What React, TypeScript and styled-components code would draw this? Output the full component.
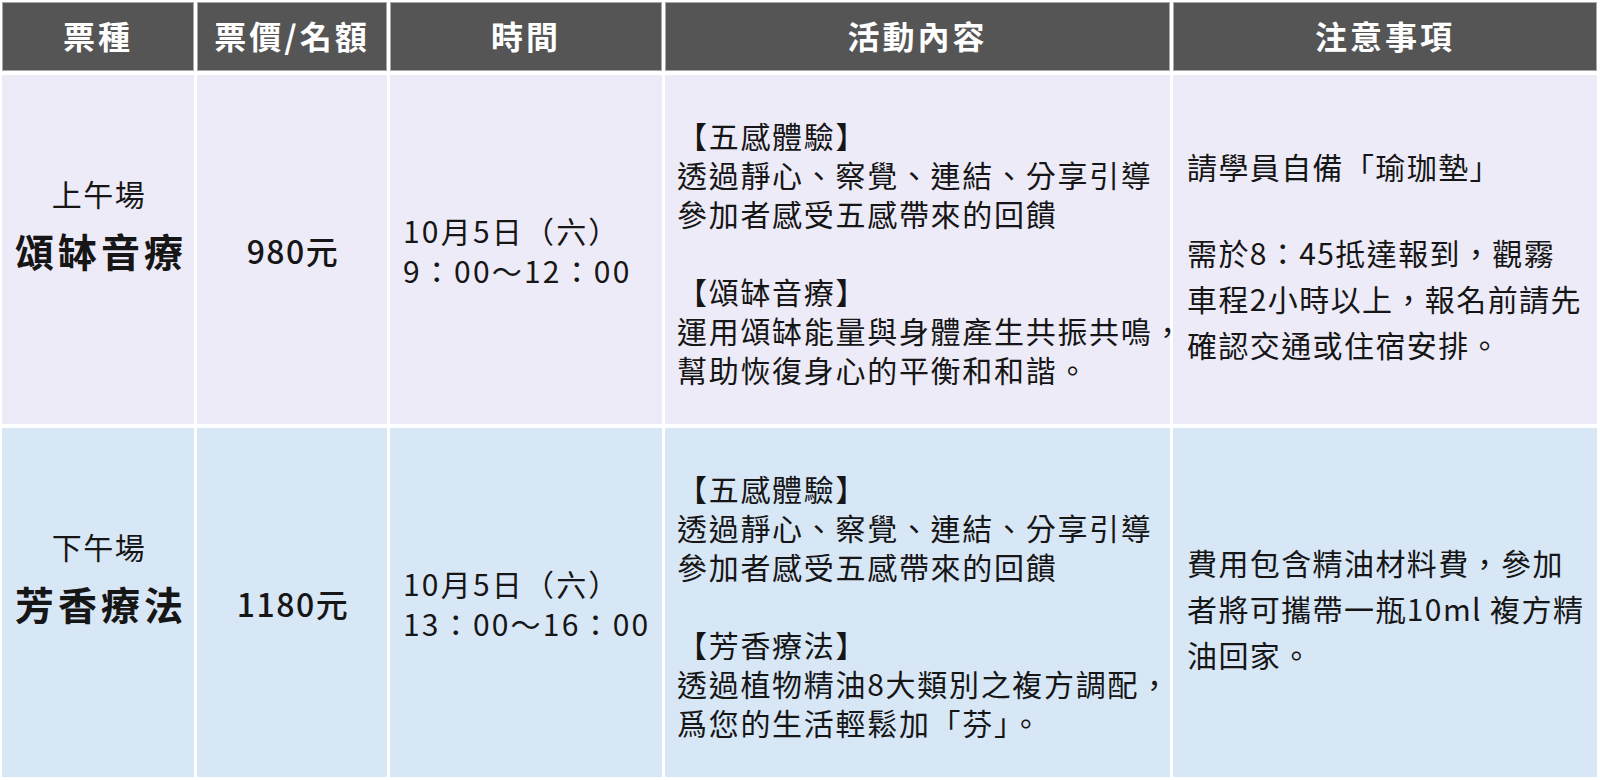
import styled, { createGlobalStyle } from "styled-components"

const GlobalStyle = createGlobalStyle`
    html, body {
        margin: 0;
        padding: 0;
        background: #ffffff;
    }
    body {
        font-family: "Noto Sans CJK TC", "Noto Sans", sans-serif;
        color: #161616;
    }
`

const Page = styled.div`
    padding: 2px 3px 3px 2px;
`

const Grid = styled.div`
    display: grid;
    grid-template-columns: 192px 190px 272px 505px 424px;
    grid-template-rows: 69px 349px 349px;
    column-gap: 3px;
    row-gap: 4px;
`

const HeadCell = styled.div`
    display: flex;
    align-items: center;
    justify-content: center;
    background-color: #555555;
    border: 1px solid #a9a9a9;
    color: #ffffff;
    font-size: 32px;
    font-weight: 700;
    letter-spacing: 3px;
    padding-bottom: 3px;
    box-sizing: border-box;
`

interface CellProps {
    $tone: "morning" | "afternoon"
    $inset?: number
    $shift?: number
}

// $inset: left padding for left aligned columns, centered otherwise
// $shift: pushes the content down from the true middle (positive) or up (negative)
const Cell = styled.div<CellProps>`
    display: flex;
    flex-direction: column;
    justify-content: center;
    align-items: ${p => (p.$inset !== undefined ? "flex-start" : "center")};
    background-color: ${p => (p.$tone === "morning" ? "#edebf8" : "#d8e7f6")};
    padding-left: ${p => p.$inset ?? 0}px;
    padding-top: ${p => Math.max(p.$shift ?? 0, 0)}px;
    padding-bottom: ${p => Math.max(-(p.$shift ?? 0), 0)}px;
    box-sizing: border-box;
    white-space: nowrap;
`

const Session = styled.div`
    font-size: 30px;
    line-height: 40px;
    letter-spacing: 1.5px;
    padding-left: 2px;
`

const Title = styled.div`
    font-size: 39px;
    line-height: 56px;
    font-weight: 700;
    letter-spacing: 4px;
    padding-left: 6px;
    margin-top: 9px;
`

const Price = styled.div`
    font-size: 32px;
    font-weight: 500;
    letter-spacing: 1.5px;
    padding-left: 2px;
`

const TimeText = styled.div`
    font-size: 30px;
    line-height: 40px;
    letter-spacing: 2.2px;
`

const Block = styled.div`
    font-size: 30px;
    line-height: 39px;
    letter-spacing: 1.7px;

    & + & {
        margin-top: 39px;
    }
`

interface NoteProps {
    $gap?: number
}

const Note = styled.div<NoteProps>`
    font-size: 30px;
    line-height: 46px;
    letter-spacing: 1.4px;
    margin-top: ${p => p.$gap ?? 0}px;
`

interface Row {
    tone: "morning" | "afternoon"
    session: string
    title: string
    price: string
    time: string
    activity: string[][]
    notes: { lines: string[]; gap?: number }[]
}

const rows: Row[] = [
    {
        tone: "morning",
        session: "上午場",
        title: "頌缽音療",
        price: "980元",
        time: "9：00～12：00",
        activity: [
            ["【五感體驗】", "透過靜心、察覺、連結、分享引導", "參加者感受五感帶來的回饋"],
            ["【頌缽音療】", "運用頌缽能量與身體產生共振共鳴，", "幫助恢復身心的平衡和和諧。"],
        ],
        notes: [
            { lines: ["請學員自備「瑜珈墊」"] },
            { lines: ["需於8：45抵達報到，觀霧", "車程2小時以上，報名前請先", "確認交通或住宿安排。"], gap: 40 },
        ],
    },
    {
        tone: "afternoon",
        session: "下午場",
        title: "芳香療法",
        price: "1180元",
        time: "13：00～16：00",
        activity: [
            ["【五感體驗】", "透過靜心、察覺、連結、分享引導", "參加者感受五感帶來的回饋"],
            ["【芳香療法】", "透過植物精油8大類別之複方調配，", "爲您的生活輕鬆加「芬」。"],
        ],
        notes: [
            { lines: ["費用包含精油材料費，參加", "者將可攜帶一瓶10ml 複方精", "油回家。"] },
        ],
    },
]

const headers = ["票種", "票價/名額", "時間", "活動內容", "注意事項"]

function App() {
    return <Page>
        <GlobalStyle />
        <Grid>
            {headers.map(h => <HeadCell key={h}>{h}</HeadCell>)}
            {rows.map(row => [
                <Cell key={row.session + "a"} $tone={row.tone} $shift={-48}>
                    <Session>{row.session}</Session>
                    <Title>{row.title}</Title>
                </Cell>,
                <Cell key={row.session + "b"} $tone={row.tone}>
                    <Price>{row.price}</Price>
                </Cell>,
                <Cell key={row.session + "c"} $tone={row.tone} $inset={13}>
                    <TimeText>10月5日（六）</TimeText>
                    <TimeText>{row.time}</TimeText>
                </Cell>,
                <Cell key={row.session + "d"} $tone={row.tone} $inset={12} $shift={6}>
                    {row.activity.map((block, i) => (
                        <Block key={i}>
                            {block.map(line => <div key={line}>{line}</div>)}
                        </Block>
                    ))}
                </Cell>,
                <Cell key={row.session + "e"} $tone={row.tone} $inset={14} $shift={10}>
                    {row.notes.map((note, i) => (
                        <Note key={i} $gap={note.gap}>
                            {note.lines.map(line => <div key={line}>{line}</div>)}
                        </Note>
                    ))}
                </Cell>,
            ])}
        </Grid>
    </Page>
}

export default App
